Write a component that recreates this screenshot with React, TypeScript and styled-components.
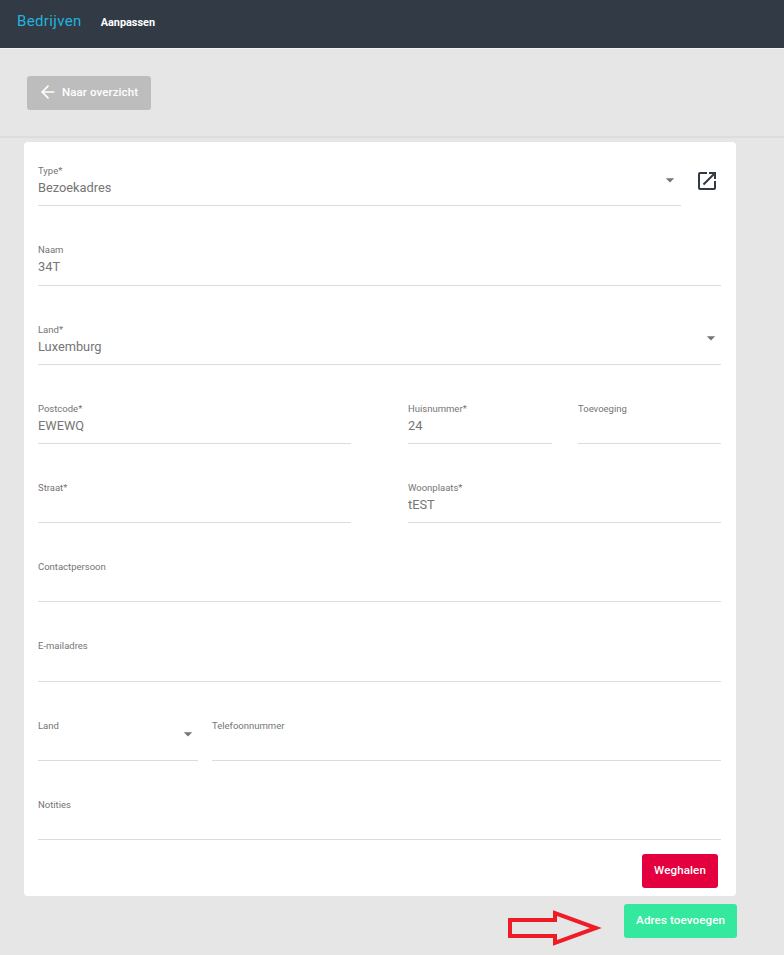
import styled, { createGlobalStyle } from "styled-components";
import { MdArrowDropDown, MdOpenInNew } from "react-icons/md";
import { FiArrowLeft } from "react-icons/fi";

const GlobalStyle = createGlobalStyle`
  html, body {
    margin: 0;
    padding: 0;
    background: #e6e6e6;
    font-family: Roboto, "Liberation Sans", sans-serif;
  }
  * {
    box-sizing: border-box;
  }
`;

const Page = styled.div`
  width: 784px;
  height: 955px;
  overflow: hidden;
  background: #e6e6e6;
`;

const Header = styled.header`
  display: flex;
  align-items: center;
  height: 49px;
  padding: 0 0 6px 17px;
  background: #323a46;
  border-bottom: 1px solid #f2f2f2;
`;

const Title = styled.h1`
  margin: 0;
  font-size: 15px;
  font-weight: 400;
  color: #1fb5dc;
  letter-spacing: 0.35px;
`;

const SubTitle = styled.span`
  margin: 2px 0 0 19px;
  font-size: 10.9px;
  font-weight: 700;
  color: #fff;
`;

const ActionBar = styled.div`
  display: flex;
  align-items: flex-start;
  height: 89px;
  padding: 27px 27px 0;
  border-bottom: 2px solid #dcdcdc;
`;

const BackButton = styled.button`
  display: flex;
  align-items: center;
  gap: 4px;
  width: 124px;
  height: 34px;
  padding: 0 0 2px 11px;
  border: 0;
  border-radius: 3px;
  background: #bdbdbd;
  color: #fff;
  font: 500 11.5px Roboto, sans-serif;
  letter-spacing: 0.1px;
`;

const Card = styled.main`
  width: 712px;
  height: 754px;
  margin: 4px 0 0 24px;
  padding: 0 15px 0 14px;
  border-radius: 4px;
  background: #fff;
`;

const Row = styled.div<{ $columns?: string; $gap?: string }>`
  display: grid;
  grid-template-columns: ${(p) => p.$columns ?? "1fr"};
  column-gap: ${(p) => p.$gap ?? "0"};
  height: 79.2px;
`;

const Field = styled.div`
  position: relative;
  display: flex;
  flex-direction: column;
  justify-content: flex-end;
  height: 100%;
  padding-bottom: 9.3px;
  border-bottom: 1px solid #dcdcdc;
`;

const Label = styled.label`
  position: absolute;
  top: 38px;
  left: 0;
  font-size: 9.5px;
  line-height: 12px;
  color: #757575;
`;

const Value = styled.div`
  font-size: 12.8px;
  line-height: 16px;
  min-height: 16px;
  color: #757575;
`;

const Caret = styled(MdArrowDropDown)<{ $bottom: number; $right?: number }>`
  position: absolute;
  right: ${(p) => p.$right ?? 0}px;
  bottom: ${(p) => p.$bottom}px;
  width: 20px;
  height: 20px;
  color: #757575;
`;

const TypeRow = styled.div`
  display: flex;
  align-items: flex-start;
  height: 64.45px;
`;

const TypeField = styled(Field)`
  flex: none;
  width: 643px;
`;

const TypeLabel = styled(Label)`
  top: 23px;
`;

const LinkIcon = styled(MdOpenInNew)`
  flex: none;
  width: 24px;
  height: 24px;
  margin: 27px 0 0 14px;
  color: #323a46;
`;

const CardFooter = styled.div`
  display: flex;
  justify-content: flex-end;
  padding: 14px 3px 0 0;
`;

const ActionButton = styled.button<{ $bg: string }>`
  height: 34px;
  padding: 0 12px 2px;
  border: 0;
  border-radius: 3px;
  background: ${(p) => p.$bg};
  color: #fff;
  font: 500 11.6px Roboto, sans-serif;
  letter-spacing: 0.1px;
`;

const PageFooter = styled.div`
  display: flex;
  justify-content: flex-end;
  gap: 22px;
  width: 737px;
  margin-top: 8px;
`;

const Arrow = styled.svg`
  flex: none;
  width: 94px;
  height: 38px;
  margin-top: 6px;
`;

function InputField({ label, value }: { label: string; value?: string }) {
  return (
    <Field>
      <Label>{label}</Label>
      <Value>{value}</Value>
    </Field>
  );
}

export default function App() {
  return (
    <Page>
      <GlobalStyle />
      <Header>
        <Title>Bedrijven</Title>
        <SubTitle>Aanpassen</SubTitle>
      </Header>
      <ActionBar>
        <BackButton>
          <FiArrowLeft size={20} strokeWidth={2} />
          Naar overzicht
        </BackButton>
      </ActionBar>
      <Card>
        <TypeRow>
          <TypeField>
            <TypeLabel>Type*</TypeLabel>
            <Value>Bezoekadres</Value>
            <Caret $bottom={15} $right={1} />
          </TypeField>
          <LinkIcon />
        </TypeRow>
        <Row>
          <InputField label="Naam" value="34T" />
        </Row>
        <Row>
          <Field>
            <Label>Land*</Label>
            <Value>Luxemburg</Value>
            <Caret $bottom={16} />
          </Field>
        </Row>
        <Row $columns="313px 1fr" $gap="57px">
          <InputField label="Postcode*" value="EWEWQ" />
          <Row $columns="144px 1fr" $gap="26px">
            <InputField label="Huisnummer*" value="24" />
            <InputField label="Toevoeging" />
          </Row>
        </Row>
        <Row $columns="313px 1fr" $gap="57px">
          <InputField label="Straat*" />
          <InputField label="Woonplaats*" value="tEST" />
        </Row>
        <Row>
          <InputField label="Contactpersoon" />
        </Row>
        <Row>
          <InputField label="E-mailadres" />
        </Row>
        <Row $columns="160px 1fr" $gap="14px">
          <Field>
            <Label>Land</Label>
            <Value />
            <Caret $bottom={16} />
          </Field>
          <InputField label="Telefoonnummer" />
        </Row>
        <Row>
          <InputField label="Notities" />
        </Row>
        <CardFooter>
          <ActionButton $bg="#e4003f">Weghalen</ActionButton>
        </CardFooter>
      </Card>
      <PageFooter>
        <Arrow viewBox="0 0 94 38">
          <path
            d="M2 10 H47 V3 L88 18 L47 33 V26 H2 Z"
            fill="none"
            stroke="#ee1c25"
            strokeWidth="4"
          />
        </Arrow>
        <ActionButton $bg="#34e89e">Adres toevoegen</ActionButton>
      </PageFooter>
    </Page>
  );
}
